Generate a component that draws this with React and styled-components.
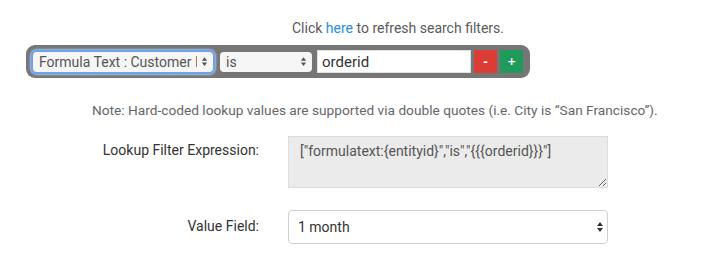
import React, { useState } from 'react';
import styled, { createGlobalStyle } from 'styled-components';

const arrows = (color) =>
    `url("data:image/svg+xml;utf8,<svg xmlns='http://www.w3.org/2000/svg' width='8' height='12' viewBox='0 0 8 12'><path d='M4 1 L7 5 L1 5 Z' fill='${color.replace('#', '%23')}'/><path d='M4 11 L7 7 L1 7 Z' fill='${color.replace('#', '%23')}'/></svg>")`;

export default function App() {
    const [form, setForm] = useState(initialState);

    const handleChange = (e) => {
        const { name, value } = e.target;
        setForm({ ...form, [name]: value });
    };

    return (
        <>
            <GlobalStyle />
            <Page>
                <RefreshLine>
                    Click <a href="#refresh">here</a> to refresh search filters.
                </RefreshLine>
                <FilterBar>
                    <FilterSelect name='field' value={form.field} onChange={handleChange} $focused $width={180}>
                        <option>Formula Text : Customer ID</option>
                    </FilterSelect>
                    <FilterSelect name='operator' value={form.operator} onChange={handleChange} $width={92}>
                        <option>is</option>
                        <option>is not</option>
                    </FilterSelect>
                    <FilterInput name='value' value={form.value} onChange={handleChange} />
                    <SquareButton $color='#dc3c36'>-</SquareButton>
                    <SquareButton $color='#1f9a5a'>+</SquareButton>
                </FilterBar>
                <Note>
                    Note: Hard-coded lookup values are supported via double quotes (i.e. City is “San Francisco”).
                </Note>
                <FormGrid>
                    <Label htmlFor='expr' $top={5}>Lookup Filter Expression:</Label>
                    <Expression id='expr' readOnly value={`["formulatext:{entityid}","is","{{{orderid}}}"]`} />
                    <Label htmlFor='valueField' $top={7}>Value Field:</Label>
                    <ValueSelect id='valueField' name='period' value={form.period} onChange={handleChange}>
                        <option>1 month</option>
                        <option>3 months</option>
                    </ValueSelect>
                </FormGrid>
            </Page>
        </>
    );
}

const initialState = { field: 'Formula Text : Customer ID', operator: 'is', value: 'orderid', period: '1 month' };

const GlobalStyle = createGlobalStyle`
    body {
        margin: 0;
        background: #fff;
        font-family: Roboto, "Liberation Sans", sans-serif;
    }
`;

const Page = styled.div`
    width: 726px;
    height: 255px;
    padding-top: 19px;
    box-sizing: border-box;
`;

const RefreshLine = styled.div`
    padding-left: 292px;
    font-size: 14px;
    line-height: 18px;
    color: #5a5a5a;

    a {
        color: #2a8fd4;
        text-decoration: none;
    }
`;

const FilterBar = styled.div`
    display: flex;
    align-items: center;
    gap: 6px;
    width: 504px;
    height: 33px;
    margin: 8px 0 0 26px;
    padding: 0 7px;
    box-sizing: border-box;
    background: #767676;
    border-radius: 9px;
`;

const FilterSelect = styled.select`
    appearance: none;
    width: ${(p) => p.$width}px;
    height: 20px;
    padding: 0 16px 0 6px;
    margin-right: 1px;
    box-sizing: border-box;
    border: none;
    border-radius: 4px;
    background: #f6f6f6 ${arrows('#555')} no-repeat right 5px center / 7px 11px;
    font-family: Roboto, "Liberation Sans", sans-serif;
    font-size: 14px;
    color: #555;
    box-shadow: ${(p) => (p.$focused ? '0 0 0 2px #6ea3e6, 0 0 2px 3px #9cc1ef' : 'none')};
    outline: none;
`;

const FilterInput = styled.input`
    width: 154px;
    height: 23px;
    padding: 0 4px;
    box-sizing: border-box;
    border: 1px solid #e2e2e2;
    background: #fff;
    font-family: Roboto, "Liberation Sans", sans-serif;
    font-size: 15px;
    color: #333;
    outline: none;
    margin-left: -2px;
`;

const SquareButton = styled.button`
    width: 23px;
    height: 23px;
    padding: 0;
    margin-left: -3px;
    border: none;
    background: ${(p) => p.$color};
    color: #fff;
    font-family: "DejaVu Sans", sans-serif;
    font-size: 11px;
    font-weight: bold;
    line-height: 23px;
    text-align: center;
`;

const Note = styled.div`
    margin-top: 24px;
    padding-left: 92px;
    font-size: 13.7px;
    line-height: 16px;
    color: #666;
`;

const FormGrid = styled.div`
    display: grid;
    grid-template-columns: 259px 320px;
    column-gap: 29px;
    row-gap: 22px;
    margin-top: 18px;
    align-items: start;
`;

const Label = styled.label`
    padding-top: ${(p) => p.$top}px;
    text-align: right;
    font-size: 14px;
    line-height: 18px;
    color: #333;
`;

const Expression = styled.textarea`
    height: 52px;
    padding: 5px 11px;
    box-sizing: border-box;
    border: 1px solid #dcdcdc;
    background: #ebebeb;
    font-family: Roboto, "Liberation Sans", sans-serif;
    font-size: 14px;
    line-height: 18px;
    color: #555;
    outline: none;
    resize: vertical;
`;

const ValueSelect = styled.select`
    appearance: none;
    height: 34px;
    padding: 0 24px 0 9px;
    box-sizing: border-box;
    border: 1px solid #d0d0d0;
    border-radius: 4px;
    background: #fff ${arrows('#333')} no-repeat right 3px center / 8px 12px;
    font-family: Roboto, "Liberation Sans", sans-serif;
    font-size: 14px;
    color: #333;
    outline: none;
`;
